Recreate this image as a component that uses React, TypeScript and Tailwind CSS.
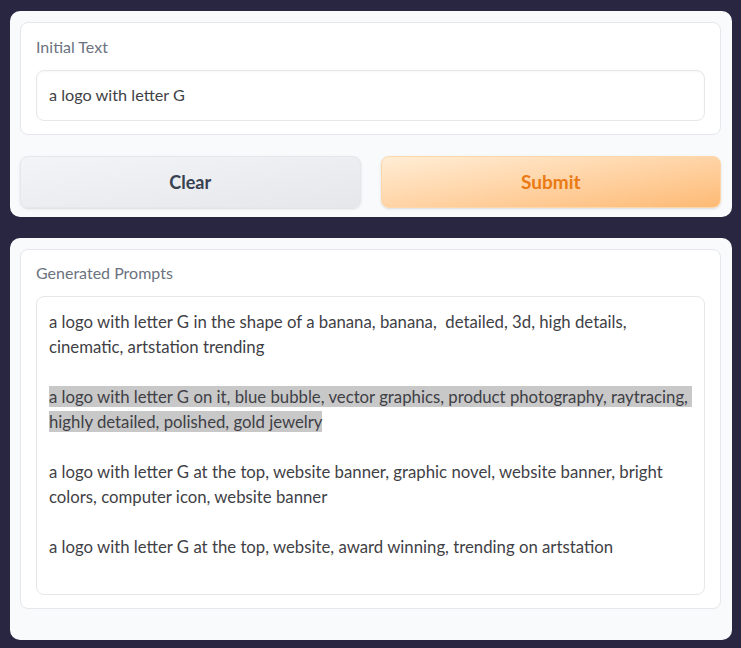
import React from "react";

export default function App() {
  const font = { fontFamily: "Lato, 'Noto Sans', sans-serif" };
  return (
    <div className="w-[741px] h-[648px] bg-[#282640] pt-[11px] pl-[10px] pr-[9px] flex flex-col gap-[21px]" style={font}>
      <div className="h-[206px] rounded-[10px] bg-[#f9fafb] pt-[11px] pl-[10px] pr-[11px] flex flex-col">
        <div className="h-[113px] rounded-[8px] bg-white border border-[#e5e7eb] px-[15px] pt-[13px] flex flex-col">
          <div className="text-[16px] leading-[22px] text-[#6b7280]">Initial Text</div>
          <div className="mt-[12px] h-[51px] rounded-[8px] border border-[#e5e7eb] bg-white px-[12px] flex items-center text-[16.25px] text-[#3f3f46] shadow-[inset_0_1px_2px_rgba(0,0,0,0.04)]">
            a logo with letter G
          </div>
        </div>
        <div className="mt-[21px] grid grid-cols-2 gap-[20px]">
          <button className="h-[52px] rounded-[8px] border border-[#e5e7eb] bg-gradient-to-br from-[#f3f4f6] to-[#e5e7eb] text-[18px] font-bold text-[#374151] shadow-sm">
            Clear
          </button>
          <button className="h-[52px] rounded-[8px] border border-[#fed7aa] bg-gradient-to-br from-[#ffedd5] to-[#fdba74] text-[19px] font-bold text-[#eb7a14] shadow-sm">
            Submit
          </button>
        </div>
      </div>
      <div className="h-[402px] rounded-[10px] bg-[#f9fafb] pt-[11px] pl-[10px] pr-[11px]">
        <div className="h-[360px] rounded-[8px] bg-white border border-[#e5e7eb] px-[15px] pt-[12px] flex flex-col">
          <div className="text-[16px] leading-[22px] text-[#6b7280]">Generated Prompts</div>
          <div className="mt-[12px] h-[299px] rounded-[8px] border border-[#e5e7eb] bg-white px-[12px] pt-[12px] text-[16.75px] leading-[25px] text-[#3f3f46] whitespace-pre">
            <div>a logo with letter G in the shape of a banana, banana,  detailed, 3d, high details,</div>
            <div>cinematic, artstation trending</div>
            <div>&nbsp;</div>
            <div><span className="bg-[#c8c8c8]">a logo with letter G on it, blue bubble, vector graphics, product photography, raytracing, </span></div>
            <div><span className="bg-[#c8c8c8]">highly detailed, polished, gold jewelry</span></div>
            <div>&nbsp;</div>
            <div>a logo with letter G at the top, website banner, graphic novel, website banner, bright</div>
            <div>colors, computer icon, website banner</div>
            <div>&nbsp;</div>
            <div>a logo with letter G at the top, website, award winning, trending on artstation</div>
          </div>
        </div>
      </div>
    </div>
  );
}
